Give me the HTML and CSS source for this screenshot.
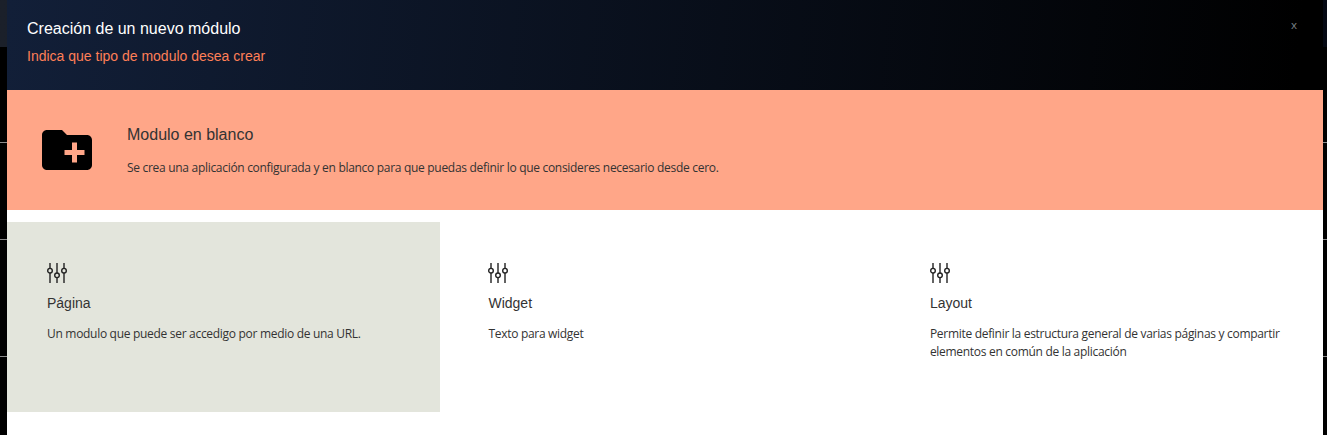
FILE: index.html
```html
<!DOCTYPE html>
<html lang="es">
<head>
<meta charset="utf-8">
<title>Creación de un nuevo módulo</title>
<link rel="stylesheet" href="styles.css">
</head>
<body>
<svg class="sprite" aria-hidden="true">
  <symbol id="sliders" viewBox="0 0 20 20">
    <g fill="none" stroke="#222" stroke-width="1.4">
      <path d="M3 0v5.4M3 10v10M10 0v10M10 14.6V20M17 0v5.4M17 10v10"/>
      <circle cx="3" cy="7.7" r="2.3"/><circle cx="10" cy="12.3" r="2.3"/><circle cx="17" cy="7.7" r="2.3"/>
    </g>
  </symbol>
</svg>
<main class="modal">
  <header class="modal-header">
    <div>
      <h1 class="title">Creación de un nuevo módulo</h1>
      <p class="subtitle">Indica que tipo de modulo desea crear</p>
    </div>
    <button class="close" type="button">x</button>
  </header>
  <section class="blank">
    <svg class="folder" viewBox="2 4 20 16"><path d="M20 6h-8l-2-2H4c-1.11 0-1.99.89-1.99 2L2 18c0 1.11.89 2 2 2h16c1.11 0 2-.89 2-2V8c0-1.11-.89-2-2-2zm-1 8h-3v3h-2v-3h-3v-2h3V9h2v3h3v2z"/></svg>
    <div>
      <h2 class="blank-title">Modulo en blanco</h2>
      <p class="text blank-text">Se crea una aplicación configurada y en blanco para que puedas definir lo que consideres necesario desde cero.</p>
    </div>
  </section>
  <section class="cards">
    <article class="card selected">
      <svg class="icon"><use href="#sliders"/></svg>
      <h3 class="card-title">Página</h3>
      <p class="text">Un modulo que puede ser accedigo por medio de una URL.</p>
    </article>
    <article class="card">
      <svg class="icon"><use href="#sliders"/></svg>
      <h3 class="card-title">Widget</h3>
      <p class="text">Texto para widget</p>
    </article>
    <article class="card">
      <svg class="icon"><use href="#sliders"/></svg>
      <h3 class="card-title">Layout</h3>
      <p class="text">Permite definir la estructura general de varias páginas y compartir elementos en común de la aplicación</p>
    </article>
  </section>
</main>
</body>
</html>
```
FILE: styles.css
```css
* { box-sizing: border-box; }
h1, h2, h3, p { margin: 0; font-weight: 400; }
body {
  margin: 0;
  height: 435px;
  overflow: hidden;
  padding: 0 4px 0 7px;
  font-family: "Liberation Sans", Arial, sans-serif;
  color: #333;
  background:
    linear-gradient(#8c8c8c, #8c8c8c) 0 142px / 100% 1px no-repeat,
    linear-gradient(#8c8c8c, #8c8c8c) 0 239px / 100% 1px no-repeat,
    linear-gradient(#8c8c8c, #8c8c8c) 0 356px / 100% 1px no-repeat,
    linear-gradient(90deg, #1b202a, #040812) 0 0 / 100% 47px no-repeat,
    #000;
}
.sprite { position: absolute; width: 0; height: 0; }
.modal { height: 435px; background: #fff; }
.modal-header {
  display: flex;
  justify-content: space-between;
  align-items: flex-start;
  height: 90px;
  padding: 19px 26px 0 20px;
  background: linear-gradient(95deg, #121f38, #000 98%);
}
.title { font-size: 16px; line-height: 20px; color: #fff; }
.subtitle { margin-top: 8px; font-size: 14px; line-height: 18px; color: #ff7f57; }
.close {
  margin-top: -1px;
  padding: 0;
  border: 0;
  background: none;
  font: 11.5px/14px "Open Sans", sans-serif;
  color: #7c8288;
}
.blank {
  display: flex;
  gap: 35px;
  height: 120px;
  padding: 35px 35px 0;
  background: #ffa688;
}
.folder { width: 50px; height: 40px; margin-top: 5px; }
.blank-title { font-size: 16px; line-height: 20px; }
.text {
  font: 12px/18px "Open Sans", "Noto Sans", sans-serif;
  letter-spacing: -0.3px;
}
.blank-text { margin-top: 14px; }
.cards {
  display: grid;
  grid-template-columns: repeat(3, 1fr);
  gap: 8.4px;
  margin-top: 12px;
}
.card { height: 190px; padding: 41px 38px 0 40px; }
.selected { background: #e3e5dc; }
.icon { display: block; width: 20px; height: 20px; }
.card-title { margin: 11px 0 13px; font-size: 14px; line-height: 18px; }
```
